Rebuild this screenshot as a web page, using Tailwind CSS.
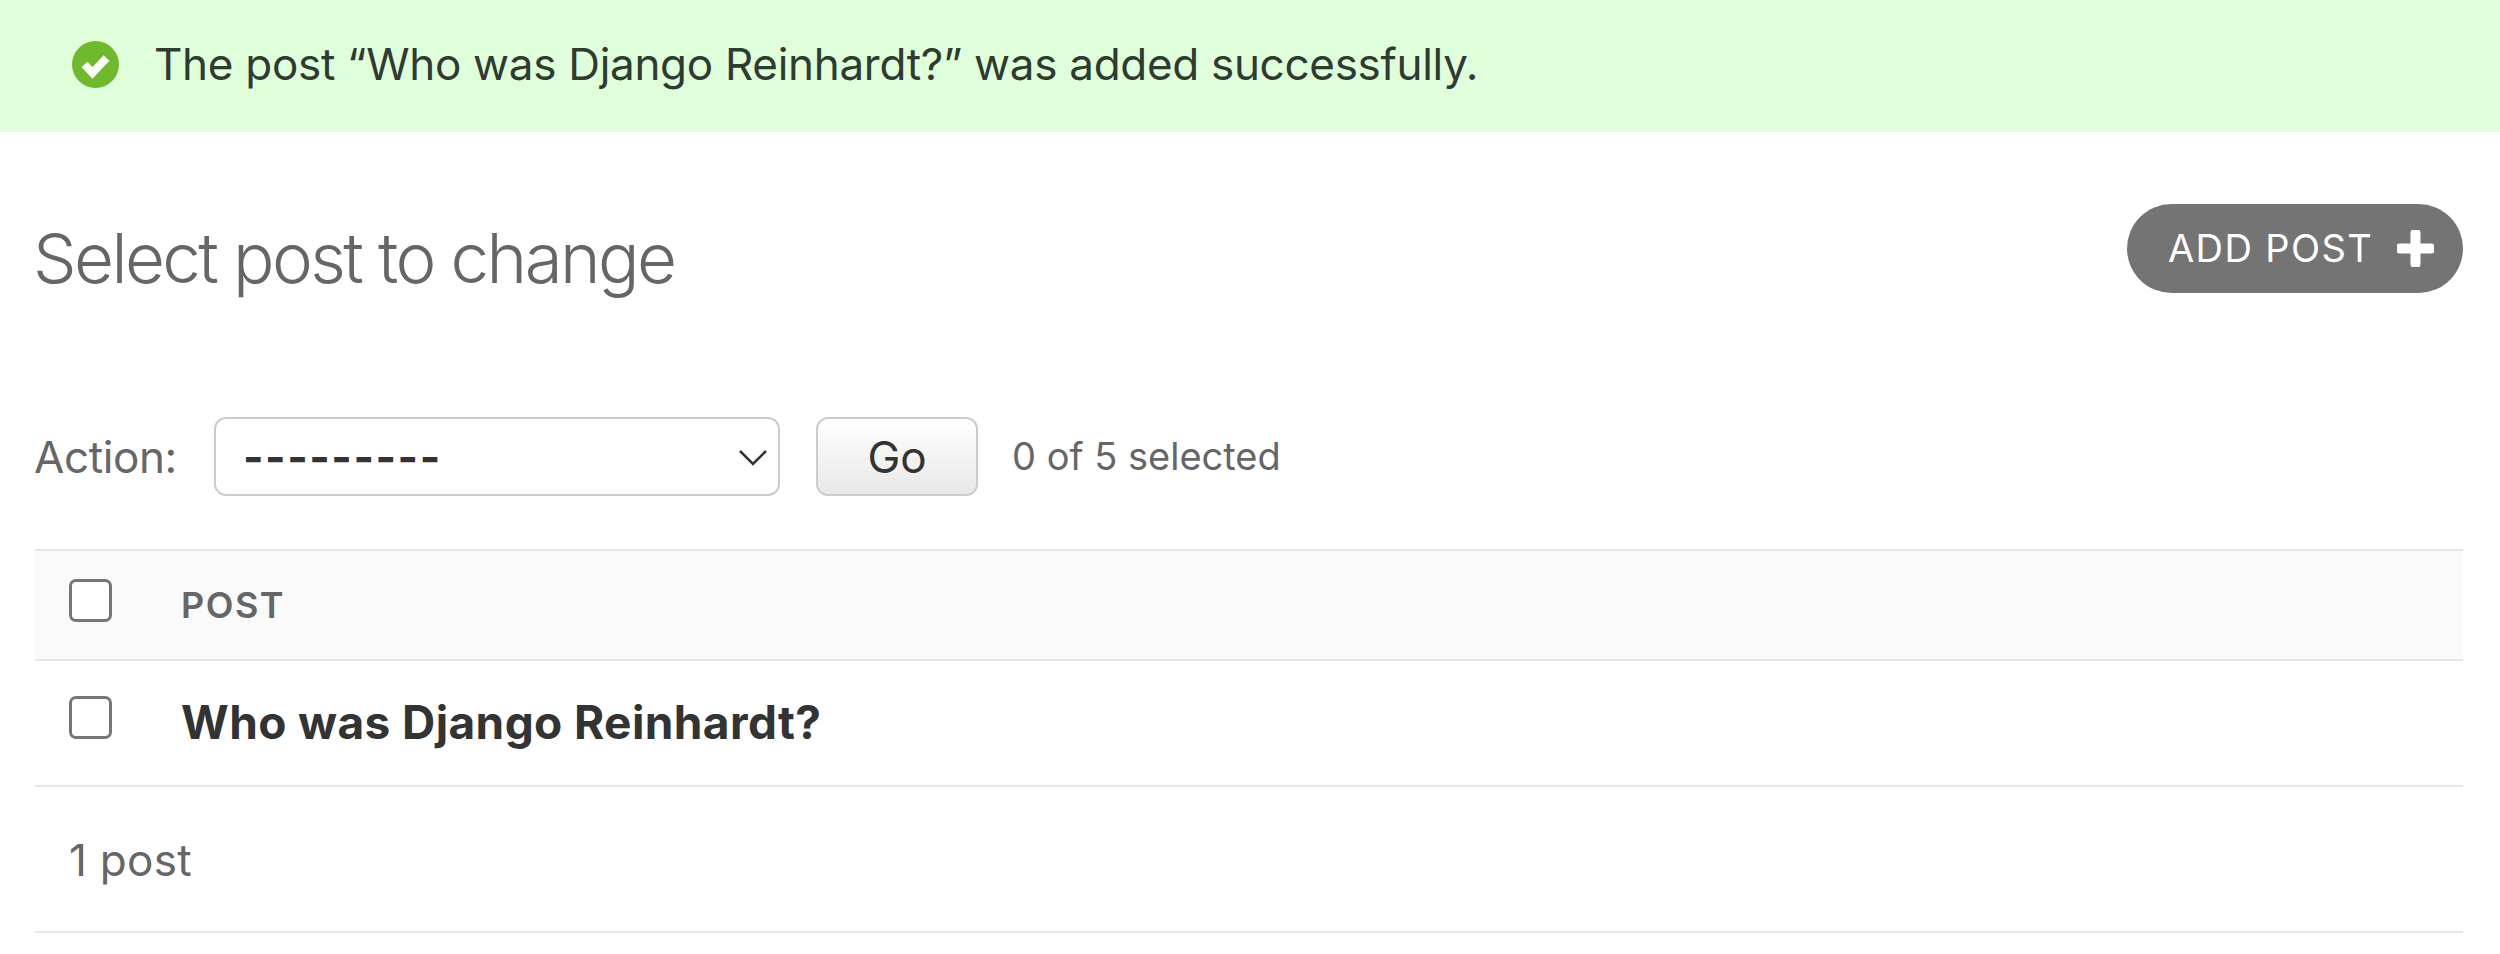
<!DOCTYPE html>
<html lang="en">
<head>
    <meta charset="UTF-8">
    <title>Select post to change</title>
    <script src="https://cdn.jsdelivr.net/npm/@tailwindcss/browser@4"></script>
</head>
<body class="bg-white font-['Inter',sans-serif] h-[954px] overflow-hidden">

    <!-- Success message -->
    <div class="h-[132px] bg-[#dfffdb] flex items-center pl-[72px] pb-[4px] text-[#2f3a30] text-[44px] tracking-[-0.3px] gap-[35px]">
        <svg class="w-[47px] h-[47px] shrink-0" viewBox="0 0 47 47">
            <circle cx="23.5" cy="23.5" r="23.5" fill="#6fba2c"/>
            <path d="M12.5 23.5l8 8.500L34.500 17" fill="none" stroke="#fff" stroke-width="8"/>
        </svg>
        <span class="font-normal">The post “Who was Django Reinhardt?” was added successfully.</span>
    </div>

    <main class="pl-[35px] pr-[37px]">

        <!-- Title and add button -->
        <div class="flex justify-between items-start pt-[72px] h-[161px]">
            <h1 class="text-[69px] leading-[78px] font-light tracking-[-2.6px] text-[#666] mt-[15px] -ml-[2px]">Select post to change</h1>
            <a class="w-[336px] h-[89px] rounded-full bg-[#747474] text-white text-[38px] tracking-[1.4px] flex items-center pl-[41px] gap-[24px]">
                <span>ADD POST</span>
                <svg class="w-[37px] h-[37px]" viewBox="0 0 37 37"><path d="M18.5 3v31M3 18.5h31" stroke="#fff" stroke-width="10" stroke-linecap="round"/></svg>
            </a>
        </div>

        <!-- Actions -->
        <div class="flex items-center mt-[124px] h-[79px]">
            <label class="text-[44px] tracking-[-0.4px] text-[#666] w-[180px] -ml-[1px] shrink-0">Action:</label>
            <div class="relative w-[566px] h-[79px]">
                <select class="appearance-none w-full h-full bg-white border-2 border-[#cccccc] rounded-[12px] pl-[27px] text-[44px] font-bold tracking-[1.5px] text-[#333]">
                    <option>---------</option>
                </select>
                <svg class="absolute right-[12px] top-[32px] w-[30px] h-[18px] pointer-events-none" viewBox="0 0 30 18"><path d="M2 2l13 13L28 2" fill="none" stroke="#333" stroke-width="2.5"/></svg>
            </div>
            <button class="ml-[36px] w-[162px] h-[79px] rounded-[12px] border-2 border-[#cccccc] bg-linear-to-b from-white to-[#e8e8e8] text-[44px] text-[#333]">Go</button>
            <span class="ml-[34px] text-[38px] text-[#666]">0 of 5 selected</span>
        </div>

        <!-- Table -->
        <div class="mt-[53px]">
            <div class="h-[112px] bg-[#fafafa] border-y-2 border-[#e6e6e6] flex items-start">
                <input type="checkbox" class="appearance-none w-[43px] h-[43px] ml-[34px] mt-[28px] rounded-[7px] border-[3px] border-[#767676] bg-white">
                <span class="ml-[69px] mt-[34px] text-[36px] leading-[40px] font-semibold text-[#666] tracking-[1.5px]">POST</span>
            </div>
            <div class="h-[126px] border-b-2 border-[#e6e6e6] flex items-start">
                <input type="checkbox" class="appearance-none w-[43px] h-[43px] ml-[34px] mt-[35px] rounded-[7px] border-[3px] border-[#767676] bg-white">
                <span class="ml-[69px] mt-[33px] text-[46px] leading-[56px] font-bold tracking-[0.4px] text-[#333]">Who was Django Reinhardt?</span>
            </div>
            <div class="h-[146px] border-b-2 border-[#e6e6e6] flex items-center pl-[34px] pt-[2px] text-[44px] tracking-[0.3px] text-[#666]">1 post</div>
        </div>

    </main>

</body>
</html>
